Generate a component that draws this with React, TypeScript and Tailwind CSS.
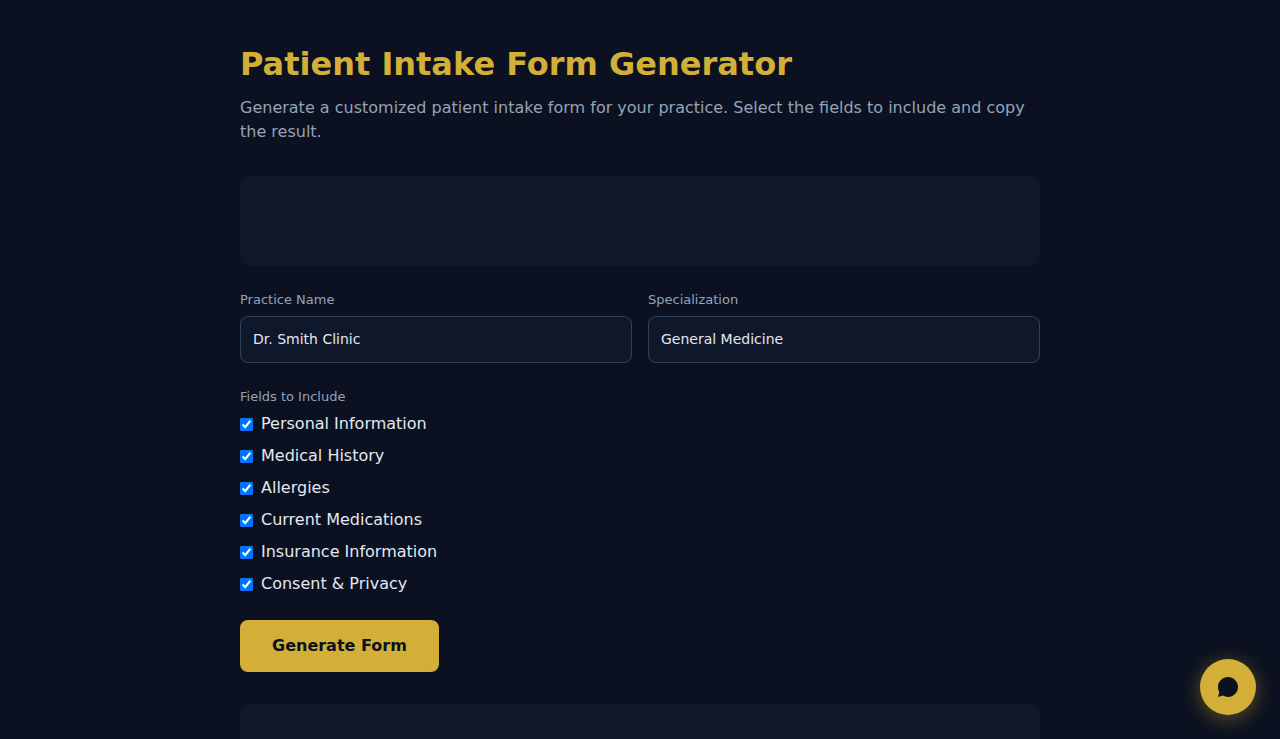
import { useState } from 'react';

const FIELDS = [
  'Personal Information',
  'Medical History',
  'Allergies',
  'Current Medications',
  'Insurance Information',
  'Consent & Privacy',
];

const labelClass = 'block text-[13px] leading-5 text-[#94a3b8]';
const inputClass =
  'w-full bg-[#0f172a] border border-[#334155] rounded-lg p-3 text-sm leading-[21px] text-[#e2e8f0] focus:outline-none focus:border-[#d4af37]';

export default function App() {
  const [practiceName, setPracticeName] = useState('Dr. Smith Clinic');
  const [specialization, setSpecialization] = useState('General Medicine');
  const [selected, setSelected] = useState<string[]>(FIELDS);

  const toggleField = (field: string) => {
    setSelected((prev) => (prev.includes(field) ? prev.filter((f) => f !== field) : [...prev, field]));
  };

  return (
    <div className="min-h-screen bg-[#0b1120] text-[#e2e8f0] font-['DejaVu_Sans',sans-serif]">
      <main className="max-w-[800px] mx-auto py-10">
        <h1 className="text-[32px] leading-[48px] font-bold text-[#d4af37] mb-2">Patient Intake Form Generator</h1>
        <p className="text-base text-[#94a3b8] mb-8">
          Generate a customized patient intake form for your practice. Select the fields to include and copy the result.
        </p>

        {/* Banner slot */}
        <div className="h-[90px] bg-[#0f172a] rounded-lg mb-6" />

        <div className="grid grid-cols-2 gap-4 mb-6">
          <div>
            <label htmlFor="practice" className={`${labelClass} mb-1.5`}>
              Practice Name
            </label>
            <input
              id="practice"
              type="text"
              value={practiceName}
              onChange={(e) => setPracticeName(e.target.value)}
              className={inputClass}
            />
          </div>
          <div>
            <label htmlFor="specialization" className={`${labelClass} mb-1.5`}>
              Specialization
            </label>
            <input
              id="specialization"
              type="text"
              value={specialization}
              onChange={(e) => setSpecialization(e.target.value)}
              className={inputClass}
            />
          </div>
        </div>

        <fieldset className="mb-6">
          <legend className={`${labelClass} mb-[5px]`}>Fields to Include</legend>
          <div className="flex flex-col items-start gap-2">
            {FIELDS.map((field) => (
              <label key={field} className="flex items-center gap-2 text-base cursor-pointer">
                <input type="checkbox" checked={selected.includes(field)} onChange={() => toggleField(field)} />
                {field}
              </label>
            ))}
          </div>
        </fieldset>

        <button
          type="button"
          className="block bg-[#d4af37] text-[#0b1120] text-base font-bold rounded-lg px-8 py-3.5 mb-8 cursor-pointer"
        >
          Generate Form
        </button>

        {/* Banner slot */}
        <div className="h-[90px] bg-[#0f172a] rounded-lg" />
      </main>

      <button
        type="button"
        aria-label="Open chat"
        className="fixed bottom-6 right-6 size-14 rounded-full bg-[#d4af37] text-[#0b1120] flex items-center justify-center shadow-[0_4px_20px_rgba(212,175,55,0.4)] cursor-pointer"
      >
        <svg width="24" height="24" viewBox="0 0 24 24" fill="currentColor">
          <path d="M12 2C6.48 2 2 6.48 2 12c0 1.85.5 3.58 1.38 5.06L2 22l4.94-1.38A9.96 9.96 0 0 0 12 22c5.52 0 10-4.48 10-10S17.52 2 12 2z" />
        </svg>
      </button>
    </div>
  );
}
